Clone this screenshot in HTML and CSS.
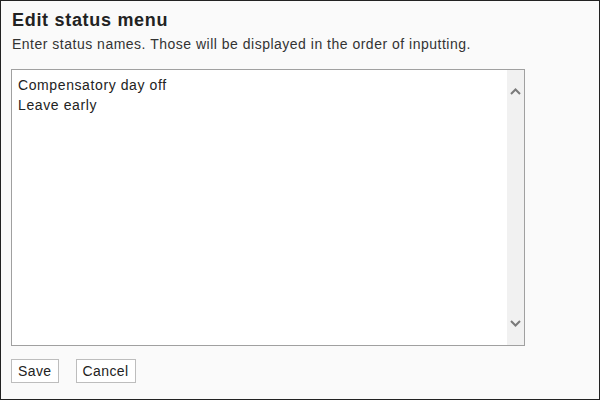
FILE: index.html
```html
<!DOCTYPE html>
<html>
<head>
<meta charset="utf-8">
<link rel="stylesheet" href="styles.css">
</head>
<body>
<div class="frame">
  <h1 class="title">Edit status menu</h1>
  <p class="desc">Enter status names. Those will be displayed in the order of inputting.</p>
  <div class="editor">
    <textarea class="input" spellcheck="false">Compensatory day off
Leave early</textarea>
    <div class="scrollbar">
      <svg class="arrow" width="11" height="7" viewBox="0 0 11 7"><path d="M1 6 L5.5 1.5 L10 6" fill="none" stroke="#7a7a7a" stroke-width="2"/></svg>
      <svg class="arrow" width="11" height="7" viewBox="0 0 11 7"><path d="M1 1 L5.5 5.5 L10 1" fill="none" stroke="#7a7a7a" stroke-width="2"/></svg>
    </div>
  </div>
  <div class="actions">
    <button class="btn">Save</button>
    <button class="btn">Cancel</button>
  </div>
</div>
</body>
</html>
```
FILE: styles.css
```css
html, body {
  margin: 0;
  padding: 0;
}
body {
  width: 600px;
  height: 400px;
  font-family: "Liberation Sans", Arial, sans-serif;
  color: #333;
}
.frame {
  box-sizing: border-box;
  width: 600px;
  height: 400px;
  border: 1px solid #222;
  background: #fafafa;
  padding: 9px 10px 0 10px;
}
.title {
  margin: 0;
  font-size: 18px;
  line-height: 20px;
  font-weight: bold;
  letter-spacing: 0.7px;
  color: #222;
  padding-left: 1px;
}
.desc {
  margin: 6px 0 0 0;
  font-size: 14px;
  line-height: 16px;
  letter-spacing: 0.5px;
  padding-left: 1px;
}
.editor {
  margin-top: 17px;
  box-sizing: border-box;
  width: 514px;
  height: 277px;
  border: 1px solid #a0a0a0;
  background: #fff;
  display: flex;
}
.input {
  flex: 1;
  border: none;
  outline: none;
  resize: none;
  margin: 0;
  padding: 5px 6px;
  font-family: "Liberation Sans", Arial, sans-serif;
  font-size: 14px;
  line-height: 20px;
  letter-spacing: 0.6px;
  color: #222;
  background: #fff;
  overflow: hidden;
}
.scrollbar {
  width: 17px;
  background: #f1f1f1;
  display: flex;
  flex-direction: column;
  justify-content: space-between;
  align-items: center;
  padding: 18px 0 18px 0;
}
.arrow {
  display: block;
}
.actions {
  margin-top: 13px;
  display: flex;
  gap: 17px;
}
.btn {
  font-family: "Liberation Sans", Arial, sans-serif;
  font-size: 14px;
  line-height: 16px;
  letter-spacing: 0.4px;
  color: #222;
  background: #fff;
  border: 1px solid #bdbdbd;
  padding: 3px 6px;
  margin: 0;
  border-radius: 0;
}
```
